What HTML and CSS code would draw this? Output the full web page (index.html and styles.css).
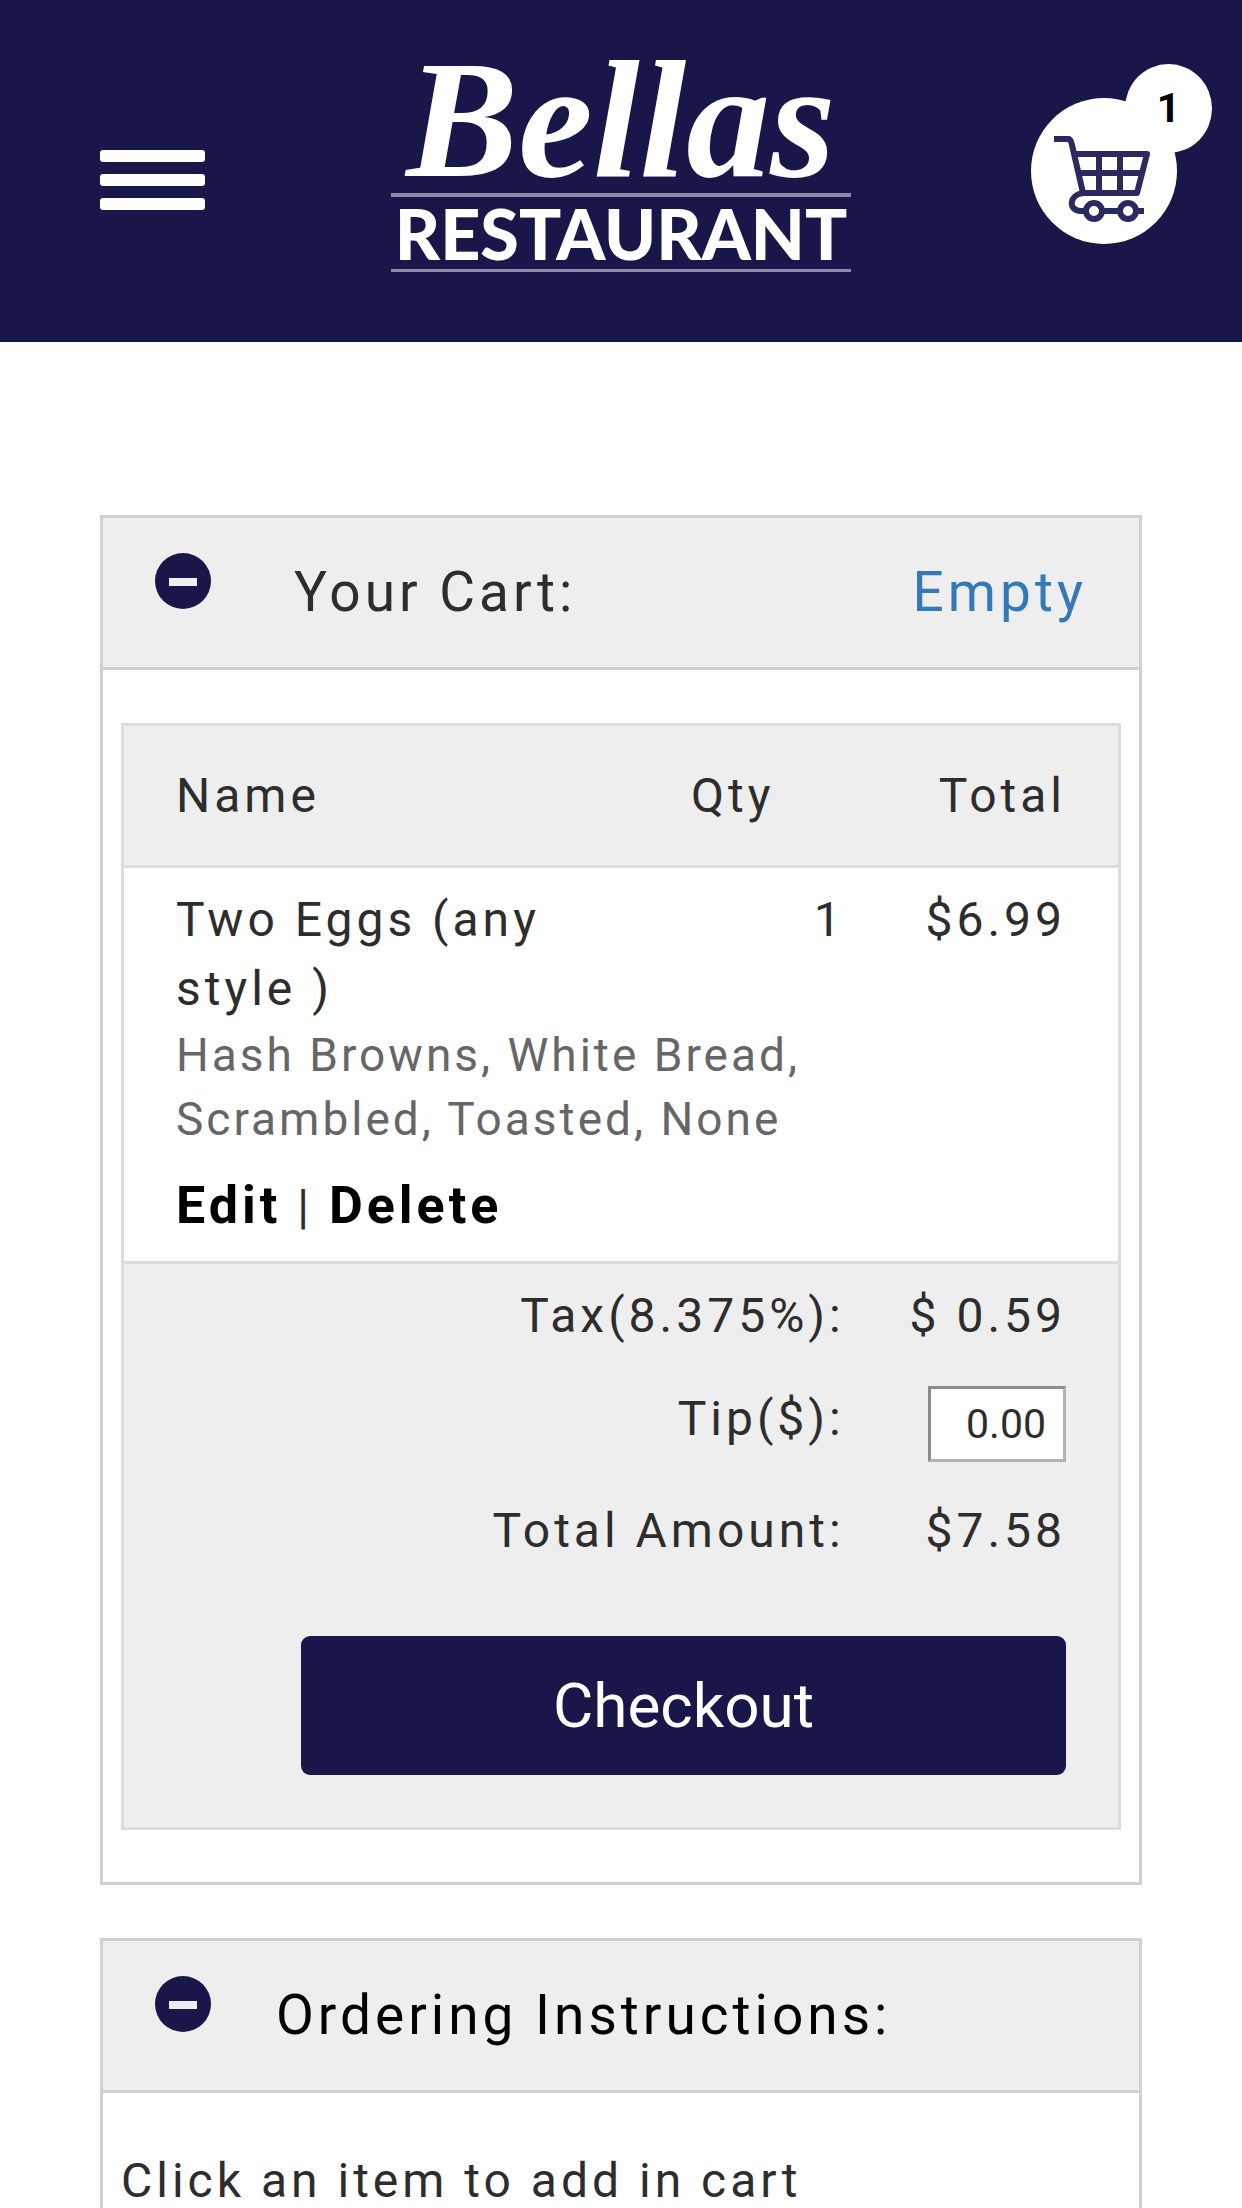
FILE: index.html
```html
<!DOCTYPE html>
<html lang="en">
<head>
  <meta charset="utf-8">
  <meta name="viewport" content="width=device-width, initial-scale=1">
  <title>Bellas Restaurant - Your Cart</title>
  <link rel="stylesheet" href="styles.css">
</head>
<body>
  <header class="site-header">
    <button class="menu-toggle" type="button" aria-label="Menu">
      <span class="menu-bar"></span>
      <span class="menu-bar"></span>
      <span class="menu-bar"></span>
    </button>
    <a class="logo" href="#">
      <span class="logo-script">Bellas</span>
      <span class="logo-caps">RESTAURANT</span>
    </a>
    <a class="cart-link" href="#" aria-label="Cart">
      <svg class="cart-icon" viewBox="0 0 146 146" aria-hidden="true">
        <circle cx="73" cy="73" r="73" fill="#fff"/>
        <g fill="none" stroke="#2b295d" stroke-width="6" stroke-linejoin="round">
          <path d="M23 41H38Q40 42 41 47L52 95H106L116 56H43"/>
          <path d="M46 75H111M68 56V95M89 56V95"/>
          <path d="M52 95C38 97 37 112 49 113H56M70 113H90M104 113H113"/>
          <circle cx="63" cy="113" r="8"/>
          <circle cx="97" cy="113" r="8"/>
        </g>
      </svg>
      <span class="cart-count">1</span>
    </a>
  </header>

  <main class="content">
    <section class="panel">
      <div class="panel-header">
        <button class="collapse" type="button" aria-label="Collapse cart">
          <svg viewBox="0 0 56 56" aria-hidden="true"><circle cx="28" cy="28" r="28" fill="#191749"/><path d="M14 25H42V33H14Z" fill="#eee"/></svg>
        </button>
        <h2 class="panel-title panel-title-cart">Your Cart:</h2>
        <a class="empty-link" href="#">Empty</a>
      </div>
      <div class="panel-body">
        <table class="cart">
          <colgroup>
            <col class="col-name">
            <col class="col-qty">
            <col class="col-total">
          </colgroup>
          <thead>
            <tr>
              <th class="name">Name</th>
              <th class="qty">Qty</th>
              <th class="amount">Total</th>
            </tr>
          </thead>
          <tbody>
            <tr class="item">
              <td class="name">Two Eggs (any style )</td>
              <td class="amount">1</td>
              <td class="amount">$6.99</td>
            </tr>
            <tr class="item-options">
              <td class="name" colspan="2">Hash Browns, White Bread, Scrambled, Toasted, None</td>
              <td></td>
            </tr>
            <tr class="item-actions">
              <td class="name" colspan="3"><a href="#">Edit</a> | <a href="#">Delete</a></td>
            </tr>
          </tbody>
          <tfoot>
            <tr>
              <td class="amount" colspan="2">Tax(8.375%):</td>
              <td class="amount">$ 0.59</td>
            </tr>
            <tr>
              <td class="amount" colspan="2"><label for="tip">Tip($):</label></td>
              <td class="amount"><input class="tip" id="tip" type="text" value="0.00"></td>
            </tr>
            <tr>
              <td class="amount" colspan="2">Total Amount:</td>
              <td class="amount">$7.58</td>
            </tr>
            <tr>
              <td class="checkout-cell" colspan="3"><button class="checkout" type="button">Checkout</button></td>
            </tr>
          </tfoot>
        </table>
      </div>
    </section>

    <section class="panel">
      <div class="panel-header">
        <button class="collapse" type="button" aria-label="Collapse instructions">
          <svg viewBox="0 0 56 56" aria-hidden="true"><circle cx="28" cy="28" r="28" fill="#191749"/><path d="M14 25H42V33H14Z" fill="#eee"/></svg>
        </button>
        <h2 class="panel-title">Ordering Instructions:</h2>
      </div>
      <div class="panel-body">
        <p class="instructions">Click an item to add in cart</p>
      </div>
    </section>
  </main>
</body>
</html>
```
FILE: styles.css
```css
* {
  box-sizing: border-box;
}

body {
  margin: 0;
  background: #fff;
  color: #2d2d2d;
  font-family: Roboto, "Liberation Sans", sans-serif;
  font-size: 48px;
  line-height: 69px;
  letter-spacing: 4px;
}

a {
  color: inherit;
  text-decoration: none;
}

button {
  border: 0;
  padding: 0;
  background: none;
  font-family: inherit;
}

/* Header */
.site-header {
  display: grid;
  grid-template-columns: 1fr auto 1fr;
  align-items: center;
  padding: 64px 0 70px;
  background: #191749;
}

.menu-toggle {
  display: flex;
  flex-direction: column;
  gap: 12px;
  width: 105px;
  margin: 24px 0 0 100px;
}

.menu-bar {
  height: 12px;
  border-radius: 3px;
  background: #fff;
}

.logo {
  display: block;
  width: 460px;
  color: #fff;
  text-align: center;
  letter-spacing: 0;
}

.logo-script {
  display: block;
  padding-bottom: 19px;
  font-family: "Liberation Serif", serif;
  font-size: 168px;
  font-style: italic;
  font-weight: 700;
  line-height: 110px;
}

.logo-caps {
  display: block;
  border-top: 4px solid #8c8bab;
  border-bottom: 3px solid #8c8bab;
  font-family: Lato, sans-serif;
  font-size: 70px;
  font-weight: 900;
  line-height: 72px;
}

.cart-link {
  position: relative;
  justify-self: end;
  width: 146px;
  height: 146px;
  margin: 6px 65px 0 0;
}

.cart-icon {
  display: block;
  width: 100%;
  height: 100%;
}

.cart-count {
  position: absolute;
  top: -34px;
  right: -35px;
  width: 87px;
  border-radius: 50%;
  background: #fff;
  color: #000;
  font-size: 41px;
  font-weight: 700;
  line-height: 89px;
  letter-spacing: 0;
  text-align: center;
}

/* Panels */
.content {
  display: flex;
  flex-direction: column;
  gap: 53px;
  padding: 173px 100px 0;
}

.panel {
  border: 3px solid #d1d1d1;
}

.panel-header {
  display: flex;
  align-items: flex-start;
  gap: 65px;
  padding: 35px 52px;
  border-bottom: 3px solid #d1d1d1;
  background: #eee;
  font-size: 55px;
  line-height: 79px;
}

.collapse {
  flex: none;
  width: 56px;
  height: 56px;
}

.collapse svg {
  display: block;
}

.panel-title {
  flex: 1;
  margin: 0;
  color: #000;
  font-size: inherit;
  font-weight: 400;
}

.panel-title-cart {
  padding-left: 18px;
  color: #2d2d2d;
}

.empty-link {
  color: #337ab7;
}

.panel-body {
  padding: 53px 18px 52px;
}

/* Cart table */
.cart {
  width: 100%;
  table-layout: fixed;
  border-collapse: separate;
  border-spacing: 0;
  border: 3px solid #ddd;
}

.col-name {
  width: 50%;
}

.col-qty {
  width: 22.5%;
}

.cart th,
.cart td {
  padding: 17px 0;
  font-weight: 400;
  text-align: left;
  vertical-align: top;
}

.cart thead th {
  padding: 35px 0;
  border-bottom: 3px solid #ddd;
  background: #eee;
}

.cart .name {
  padding-left: 52px;
}

.cart .qty {
  text-align: center;
}

.cart .amount {
  text-align: right;
}

.cart .amount:last-child {
  padding-right: 52px;
}

.cart .item td {
  padding-bottom: 0;
}

.cart .item-options td {
  padding-top: 0;
  padding-bottom: 0;
  color: #666;
  font-size: 46px;
  line-height: 64px;
  letter-spacing: 3px;
}

.cart .item-actions td {
  border-bottom: 3px solid #ddd;
  line-height: 75px;
}

.item-actions a {
  color: #000;
  font-size: 52px;
  font-weight: 700;
}

.cart tfoot td {
  background: #eee;
}

.tip {
  display: block;
  width: 138px;
  height: 76px;
  margin: 2px 0 0 auto;
  padding: 0 17px;
  border: 3px solid;
  border-color: #8c8c8c #b2b2b2 #b2b2b2 #8c8c8c;
  border-radius: 0;
  background: #fff;
  color: #2d2d2d;
  font-family: inherit;
  font-size: 41px;
  text-align: right;
}

.cart .checkout-cell {
  padding: 54px 52px 52px 177px;
}

.checkout {
  display: block;
  width: 100%;
  padding: 30px;
  border-radius: 9px;
  background: #191749;
  color: #fff;
  font-size: 62px;
  line-height: 79px;
}

.instructions {
  margin: 0;
}
```
